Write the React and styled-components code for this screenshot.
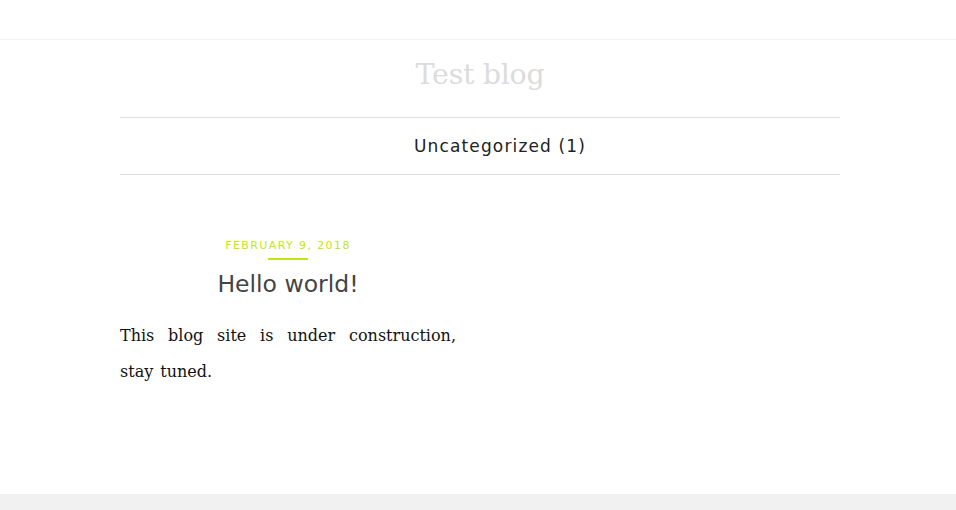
import React from "react";
import styled, { createGlobalStyle } from "styled-components";

const Global = createGlobalStyle`
  html, body { margin: 0; padding: 0; background: #fff; }
  body { font-family: "Liberation Serif", serif; }
`;

const Page = styled.div`
  min-height: 510px;
  display: flex;
  flex-direction: column;
`;

const TopBar = styled.div`
  height: 39px;
  border-bottom: 1px solid #f3f3f3;
`;

const Container = styled.div`
  width: 720px;
  margin: 0 116px 0 120px;
  flex: 1;
`;

const SiteTitle = styled.h1`
  margin: 0;
  height: 77px;
  box-sizing: border-box;
  padding-bottom: 8px;
  display: flex;
  align-items: center;
  justify-content: center;
  font-family: "DejaVu Serif", serif;
  font-weight: 400;
  font-size: 28.5px;
  color: #dcdcdc;
  letter-spacing: -0.3px;
`;

const CatNav = styled.nav`
  border-top: 1px solid #dddddd;
  border-bottom: 1px solid #dddddd;
  height: 56px;
  display: flex;
  align-items: center;
  justify-content: center;
  padding-left: 40px;
  font-family: "DejaVu Sans", sans-serif;
  font-size: 17px;
  letter-spacing: 1.15px;
  color: #222;
`;

const Posts = styled.div`
  padding-top: 64px;
  width: 336px;
`;

const Post = styled.article`
  display: flex;
  flex-direction: column;
`;

const DateLine = styled.div`
  text-align: center;
  font-family: "DejaVu Sans", sans-serif;
  font-size: 11px;
  letter-spacing: 1.4px;
  color: #c2e80e;
  line-height: 14px;
  &::after {
    content: "";
    display: block;
    width: 40px;
    height: 2px;
    background: #c2e80e;
    margin: 5px auto 0 auto;
  }
`;

const PostTitle = styled.h2`
  margin: 9px 0 0 0;
  text-align: center;
  font-family: "DejaVu Sans", sans-serif;
  font-weight: 400;
  font-size: 23.5px;
  color: #444;
  line-height: 30px;
`;

const Body = styled.p`
  margin: 19px 0 0 0;
  font-family: "DejaVu Serif", serif;
  font-size: 16px;
  word-spacing: 2px;
  line-height: 36px;
  color: #111;
  text-align: justify;
`;

const Footer = styled.div`
  height: 16px;
  background: #f1f1f1;
`;

export default function App() {
  return (
    <Page>
      <Global />
      <TopBar />
      <Container>
        <SiteTitle>Test blog</SiteTitle>
        <CatNav>Uncategorized (1)</CatNav>
        <Posts>
          <Post>
            <DateLine>FEBRUARY 9, 2018</DateLine>
            <PostTitle>Hello world!</PostTitle>
            <Body>This blog site is under construction, stay tuned.</Body>
          </Post>
        </Posts>
      </Container>
      <Footer />
    </Page>
  );
}
